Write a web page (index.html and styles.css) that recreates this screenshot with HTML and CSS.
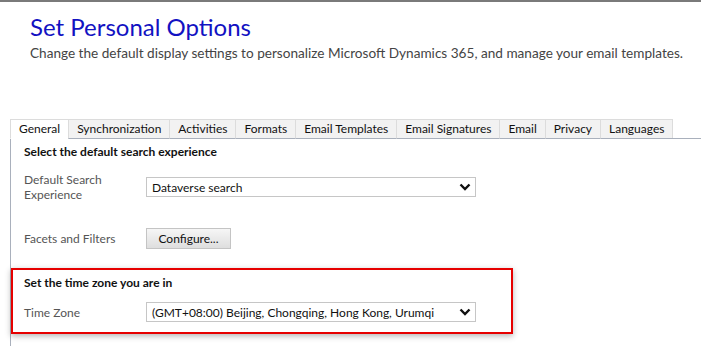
FILE: index.html
```html
<!DOCTYPE html>
<html lang="en">
<head>
    <meta charset="UTF-8">
    <title>Set Personal Options</title>
    <link rel="stylesheet" href="styles.css">
</head>
<body>
    <div class="page-head">
        <h1>Set Personal Options</h1>
        <p>Change the default display settings to personalize Microsoft Dynamics 365, and manage your email templates.</p>
    </div>

    <div class="tabs">
        <span class="tab active">General</span>
        <span class="tab">Synchronization</span>
        <span class="tab">Activities</span>
        <span class="tab">Formats</span>
        <span class="tab">Email Templates</span>
        <span class="tab">Email Signatures</span>
        <span class="tab">Email</span>
        <span class="tab">Privacy</span>
        <span class="tab">Languages</span>
        <span class="tab-fill"></span>
    </div>

    <div class="panel">
        <div class="section">
            <div class="section-title">Select the default search experience</div>
            <div class="row row-search">
                <label>Default Search<br>Experience</label>
                <div class="select">
                    <span>Dataverse search</span>
                    <svg width="12" height="8" viewBox="0 0 12 8"><path d="M1.5 1.5 L6 6 L10.5 1.5" fill="none" stroke="#111" stroke-width="2.4"/></svg>
                </div>
            </div>
            <div class="row row-facets">
                <label>Facets and Filters</label>
                <button class="btn">Configure...</button>
            </div>
        </div>

        <div class="section highlight">
            <div class="section-title">Set the time zone you are in</div>
            <div class="row row-zone">
                <label>Time Zone</label>
                <div class="select">
                    <span>(GMT+08:00) Beijing, Chongqing, Hong Kong, Urumqi</span>
                    <svg width="12" height="8" viewBox="0 0 12 8"><path d="M1.5 1.5 L6 6 L10.5 1.5" fill="none" stroke="#111" stroke-width="2.4"/></svg>
                </div>
            </div>
        </div>
    </div>
</body>
</html>
```

FILE: styles.css
```css
body {
    margin: 0;
    padding: 0;
    border-top: 2px solid #7a7a7a;
    background-color: #fff;
    font-family: Lato, "Noto Sans", sans-serif;
    color: #222;
    overflow: hidden;
    height: 344px;
}

.page-head {
    padding-left: 30px;
}

.page-head h1 {
    margin: 8px 0 0 0;
    font-size: 24px;
    font-weight: normal;
    line-height: 34px;
    color: #1212c2;
}

.page-head p {
    margin: 0;
    font-size: 13.6px;
    line-height: 18px;
    color: #444;
    white-space: nowrap;
}

.tabs {
    display: flex;
    margin-top: 57px;
    padding-left: 10px;
    white-space: nowrap;
}

.tab {
    height: 18px;
    line-height: 18px;
    padding: 0 8px;
    font-size: 12px;
    color: #111;
    background-color: #f2f2f2;
    border: 1px solid #dcdcdc;
    border-bottom: 1px solid #a9b0bc;
    margin-right: -1px;
}

.tab.active {
    background-color: #fff;
    border-bottom-color: #fff;
}

.tab-fill {
    flex: 1;
    border-bottom: 1px solid #a9b0bc;
}

.panel {
    margin-left: 10px;
    border-left: 1px solid #a9b0bc;
    height: 208px;
}

.section {
    padding: 5px 0 0 13px;
}

.section-title {
    font-size: 12px;
    font-weight: bold;
    line-height: 16px;
    color: #111;
}

.row {
    display: flex;
    align-items: flex-start;
}

.row label {
    width: 122px;
    font-size: 12px;
    line-height: 15px;
    color: #555;
}

.row-search {
    margin-top: 12px;
}

.row-search .select {
    margin-top: 5px;
}

.row-facets {
    margin-top: 26px;
    align-items: center;
}

.select {
    width: 319px;
    height: 18px;
    border: 1px solid #c6c6c6;
    display: flex;
    align-items: center;
    justify-content: space-between;
    padding: 0 4px 0 5px;
    font-size: 12px;
    color: #111;
}

.btn {
    width: 85px;
    height: 21px;
    padding: 0;
    font-family: inherit;
    font-size: 12px;
    color: #111;
    border: 1px solid #c4c4c4;
    background: linear-gradient(#f6f6f6, #dedede);
}

.highlight {
    margin-top: 19px;
    width: 487px;
    height: 57px;
    padding: 5px 0 0 11px;
    border: 2px solid #e60000;
    box-shadow: 0 2px 6px rgba(0, 0, 0, 0.3);
}

.row-zone {
    margin-top: 11px;
    align-items: center;
}
```
